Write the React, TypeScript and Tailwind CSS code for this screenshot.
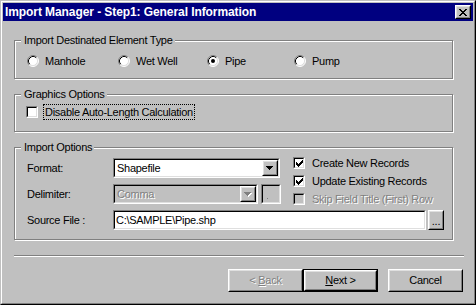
import React from "react";

type BoxProps = { className?: string; inner?: string; children?: React.ReactNode };

// classic 3D edges
const Sunken = ({ className = "", inner = "", children }: BoxProps) => (
  <div className={`border border-t-[#808080] border-l-[#808080] border-r-white border-b-white ${className}`}>
    <div className={`flex h-full w-full items-center border border-t-black border-l-black border-r-[#dfdfdf] border-b-[#dfdfdf] ${inner}`}>
      {children}
    </div>
  </div>
);

const Raised = ({ className = "", inner = "", children }: BoxProps) => (
  <div className={`border border-t-white border-l-white border-r-black border-b-black ${className}`}>
    <div className={`flex h-full w-full items-center justify-center border border-t-[#dfdfdf] border-l-[#dfdfdf] border-r-[#808080] border-b-[#808080] bg-[#c0c0c0] ${inner}`}>
      {children}
    </div>
  </div>
);

const Arrow = ({ disabled }: { disabled?: boolean }) => (
  <svg width="8" height="5" viewBox="0 0 8 5" shapeRendering="crispEdges">
    {disabled && <path fill="#fff" d="M1 1h7v1H1zM2 2h5v1H2zM3 3h3v1H3zM4 4h1v1H4z" />}
    <path fill={disabled ? "#808080" : "#000"} d="M0 0h7v1H0zM1 1h5v1H1zM2 2h3v1H2zM3 3h1v1H3z" />
  </svg>
);

const Radio = ({ checked, label }: { checked?: boolean; label: string }) => (
  <div className="flex items-center gap-[6px]">
    <svg width="12" height="12" viewBox="0 0 12 12">
      <circle cx="6" cy="6" r="5" fill="#fff" />
      <path d="M2.11 9.89A5.5 5.5 0 0 1 9.89 2.11" fill="none" stroke="#808080" />
      <path d="M9.89 2.11A5.5 5.5 0 0 1 2.11 9.89" fill="none" stroke="#fff" />
      <path d="M2.82 9.18A4.5 4.5 0 0 1 9.18 2.82" fill="none" stroke="#000" />
      <path d="M9.18 2.82A4.5 4.5 0 0 1 2.82 9.18" fill="none" stroke="#dfdfdf" />
      {checked && <circle cx="6" cy="6" r="2" fill="#000" />}
    </svg>
    <span>{label}</span>
  </div>
);

const Check = ({ checked, disabled }: { checked?: boolean; disabled?: boolean }) => (
  <Sunken className="h-[12px] w-[12px] shrink-0" inner={`justify-center ${disabled ? "bg-[#c0c0c0]" : "bg-white"}`}>
    {checked && (
      <svg width="7" height="7" viewBox="0 0 7 7" shapeRendering="crispEdges">
        <path
          fill="#000"
          d="M6 0h1v1H6zM5 1h2v1H5zM0 2h1v1H0zM4 2h3v1H4zM0 3h2v1H0zM3 3h3v1H3zM0 4h5v1H0zM1 5h3v1H1zM2 6h1v1H2z"
        />
      </svg>
    )}
  </Sunken>
);

const Group = ({ title, className = "", children }: { title: string; className?: string; children: React.ReactNode }) => (
  <div className={`relative w-[439px] border border-[#808080] shadow-[inset_1px_1px_0_#fff,1px_1px_0_#fff] ${className}`}>
    <span className="absolute -top-[8px] left-[6px] bg-[#c0c0c0] pl-[3px] pr-[2px] leading-[14px]">{title}</span>
    {children}
  </div>
);

const disabledText = "text-[#808080] [text-shadow:1px_1px_0_#fff]";

const Button = ({ children, isDefault }: { children: React.ReactNode; isDefault?: boolean }) =>
  isDefault ? (
    <div className="h-[23px] w-[75px] border border-black">
      <Raised className="h-full w-full">{children}</Raised>
    </div>
  ) : (
    <Raised className="h-[23px] w-[75px]">{children}</Raised>
  );

export default function App() {
  return (
    <div className="h-[305px] w-[476px] border border-t-[#c0c0c0] border-l-[#c0c0c0] border-r-black border-b-black bg-[#c0c0c0] font-['Liberation_Sans',Arial,sans-serif] text-[11px] tracking-[-0.28px] text-black">
      <div className="h-full border border-t-white border-l-white border-r-[#808080] border-b-[#808080]">
        <div className="mx-[1px] mt-[1px] flex h-[18px] items-center justify-between bg-[#000080] pl-[2px] pr-[2px]">
          <span className="text-[12px] font-bold tracking-[-0.08px] text-white">
            Import Manager - Step1: General Information
          </span>
          <Raised className="h-[14px] w-[16px]">
            <svg width="8" height="7" viewBox="0 0 8 7" shapeRendering="crispEdges">
              <path
                fill="#000"
                d="M0 0h2v1H0zM6 0h2v1H6zM1 1h2v1H1zM5 1h2v1H5zM2 2h4v1H2zM3 3h2v1H3zM2 4h4v1H2zM1 5h2v1H1zM5 5h2v1H5zM0 6h2v1H0zM6 6h2v1H6z"
              />
            </svg>
          </Raised>
        </div>

        <div className="pl-[12px]">
          <Group title="Import Destinated Element Type" className="mt-[19px] h-[39px]">
            <div className="flex items-center pl-[12px] pt-[13px] leading-[14px]">
              <div className="w-[91px]">
                <Radio label="Manhole" />
              </div>
              <div className="w-[89px]">
                <Radio label="Wet Well" />
              </div>
              <div className="w-[87px]">
                <Radio label="Pipe" checked />
              </div>
              <Radio label="Pump" />
            </div>
          </Group>

          <Group title="Graphics Options" className="mt-[15px] h-[38px]">
            <div className="flex h-[16px] items-center pl-[11px] mt-[9px]">
              <Check />
              <span className="ml-[5px] h-[16px] border border-dotted border-black px-[1px] leading-[14px]">
                Disable Auto-Length Calculation
              </span>
            </div>
          </Group>

          <Group title="Import Options" className="mt-[15px] h-[93px]">
            <div className="pl-[12px] pt-[6px]">
              <div className="flex items-start">
                <div className="flex flex-col gap-[6px] pt-[4px]">
                  <div className="flex h-[20px] items-center">
                    <span className="w-[86px]">Format:</span>
                    <Sunken className="h-[20px] w-[167px]" inner="bg-white">
                      <span className="flex-1 pl-[2px]">Shapefile</span>
                      <Raised className="h-[16px] w-[16px]">
                        <Arrow />
                      </Raised>
                    </Sunken>
                  </div>
                  <div className="flex h-[20px] items-center">
                    <span className="w-[86px]">Delimiter:</span>
                    <Sunken className="h-[20px] w-[145px]" inner="bg-[#c0c0c0]">
                      <span className={`flex-1 pl-[2px] ${disabledText}`}>Comma</span>
                      <Raised className="h-[16px] w-[16px]">
                        <Arrow disabled />
                      </Raised>
                    </Sunken>
                    <Sunken className="ml-[3px] h-[20px] w-[20px]" inner="items-end bg-[#c0c0c0] pb-[3px] pl-[4px]">
                      <span className="h-[1px] w-[1px] bg-[#808080]" />
                    </Sunken>
                  </div>
                </div>

                <div className="ml-[12px] flex flex-col">
                  <div className="flex h-[18px] items-center">
                    <Check checked />
                    <span className="ml-[7px]">Create New Records</span>
                  </div>
                  <div className="flex h-[18px] items-center">
                    <Check checked />
                    <span className="ml-[7px]">Update Existing Records</span>
                  </div>
                  <div className="flex h-[18px] items-center">
                    <Check disabled />
                    <span className={`ml-[7px] ${disabledText}`}>Skip Field Title (First) Row</span>
                  </div>
                </div>
              </div>

              <div className="mt-[2px] flex h-[20px] items-center">
                <span className="w-[86px]">Source File :</span>
                <Sunken className="h-[20px] w-[313px]" inner="bg-white">
                  <span className="pl-[1px]">C:\SAMPLE\Pipe.shp</span>
                </Sunken>
                <Raised className="ml-[2px] h-[20px] w-[16px]" inner="items-end pb-[2px]">
                  <span className="leading-[10px]">...</span>
                </Raised>
              </div>
            </div>
          </Group>

          <div className="mt-[15px] h-[2px] w-[450px] border-t border-b border-t-[#808080] border-b-white" />

          <div className="mt-[12px] flex w-[449px] justify-end">
            <Button>
              <span className={disabledText}>
                &lt; <span className="underline">B</span>ack
              </span>
            </Button>
            <Button isDefault>
              <span>
                <span className="underline">N</span>ext &gt;
              </span>
            </Button>
            <div className="ml-[10px]">
              <Button>Cancel</Button>
            </div>
          </div>
        </div>
      </div>
    </div>
  );
}
